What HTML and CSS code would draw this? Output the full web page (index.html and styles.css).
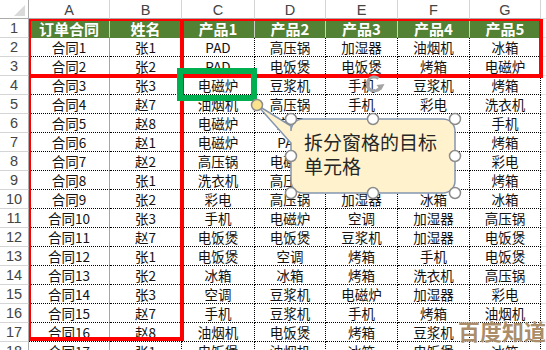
FILE: index.html
```html
<!DOCTYPE html>
<html lang="zh-CN">
<head>
    <meta charset="UTF-8">
    <title>拆分窗格</title>
    <link rel="stylesheet" href="styles.css">
</head>
<body>
<div class="page">
    <div class="sheet">
        <div class="corner"><span class="tri"></span></div>
        <div class="ch">A</div><div class="ch">B</div><div class="ch">C</div><div class="ch">D</div><div class="ch">E</div><div class="ch">F</div><div class="ch">G</div><div class="ch rest"></div>

        <div class="rh">1</div><div class="cell hdr">订单合同</div><div class="cell hdr">姓名</div><div class="cell hdr">产品1</div><div class="cell hdr">产品2</div><div class="cell hdr">产品3</div><div class="cell hdr">产品4</div><div class="cell hdr">产品5</div><div class="rest"></div>
        <div class="rh">2</div><div class="cell a">合同1</div><div class="cell">张1</div><div class="cell">PAD</div><div class="cell">高压锅</div><div class="cell">加湿器</div><div class="cell">油烟机</div><div class="cell">冰箱</div><div class="rest"></div>
        <div class="rh">3</div><div class="cell a">合同2</div><div class="cell">张2</div><div class="cell">PAD</div><div class="cell">电饭煲</div><div class="cell">电饭煲</div><div class="cell">烤箱</div><div class="cell">电磁炉</div><div class="rest"></div>
        <div class="rh">4</div><div class="cell a">合同3</div><div class="cell">张3</div><div class="cell">电磁炉</div><div class="cell">豆浆机</div><div class="cell">手机</div><div class="cell">豆浆机</div><div class="cell">烤箱</div><div class="rest"></div>
        <div class="rh">5</div><div class="cell a">合同4</div><div class="cell">赵7</div><div class="cell">油烟机</div><div class="cell">高压锅</div><div class="cell">手机</div><div class="cell">彩电</div><div class="cell">洗衣机</div><div class="rest"></div>
        <div class="rh">6</div><div class="cell a">合同5</div><div class="cell">赵8</div><div class="cell">电磁炉</div><div class="cell">空调</div><div class="cell"></div><div class="cell"></div><div class="cell">手机</div><div class="rest"></div>
        <div class="rh">7</div><div class="cell a">合同6</div><div class="cell">赵1</div><div class="cell">电磁炉</div><div class="cell">PAD</div><div class="cell"></div><div class="cell"></div><div class="cell">烤箱</div><div class="rest"></div>
        <div class="rh">8</div><div class="cell a">合同7</div><div class="cell">赵2</div><div class="cell">高压锅</div><div class="cell">电磁炉</div><div class="cell"></div><div class="cell"></div><div class="cell">彩电</div><div class="rest"></div>
        <div class="rh">9</div><div class="cell a">合同8</div><div class="cell">张1</div><div class="cell">洗衣机</div><div class="cell">高压锅</div><div class="cell"></div><div class="cell"></div><div class="cell">烤箱</div><div class="rest"></div>
        <div class="rh">10</div><div class="cell a">合同9</div><div class="cell">张2</div><div class="cell">彩电</div><div class="cell">高压锅</div><div class="cell">加湿器</div><div class="cell">冰箱</div><div class="cell">冰箱</div><div class="rest"></div>
        <div class="rh">11</div><div class="cell a">合同10</div><div class="cell">张3</div><div class="cell">手机</div><div class="cell">电磁炉</div><div class="cell">空调</div><div class="cell">加湿器</div><div class="cell">高压锅</div><div class="rest"></div>
        <div class="rh">12</div><div class="cell a">合同11</div><div class="cell">赵7</div><div class="cell">电饭煲</div><div class="cell">电饭煲</div><div class="cell">豆浆机</div><div class="cell">加湿器</div><div class="cell">电饭煲</div><div class="rest"></div>
        <div class="rh">13</div><div class="cell a">合同12</div><div class="cell">张1</div><div class="cell">电饭煲</div><div class="cell">空调</div><div class="cell">烤箱</div><div class="cell">手机</div><div class="cell">电饭煲</div><div class="rest"></div>
        <div class="rh">14</div><div class="cell a">合同13</div><div class="cell">张2</div><div class="cell">冰箱</div><div class="cell">冰箱</div><div class="cell">烤箱</div><div class="cell">洗衣机</div><div class="cell">高压锅</div><div class="rest"></div>
        <div class="rh">15</div><div class="cell a">合同14</div><div class="cell">张3</div><div class="cell">空调</div><div class="cell">豆浆机</div><div class="cell">电磁炉</div><div class="cell">加湿器</div><div class="cell">彩电</div><div class="rest"></div>
        <div class="rh">16</div><div class="cell a">合同15</div><div class="cell">赵7</div><div class="cell">手机</div><div class="cell">豆浆机</div><div class="cell">手机</div><div class="cell">烤箱</div><div class="cell">油烟机</div><div class="rest"></div>
        <div class="rh">17</div><div class="cell a">合同16</div><div class="cell">赵8</div><div class="cell">油烟机</div><div class="cell">电饭煲</div><div class="cell">烤箱</div><div class="cell">豆浆机</div><div class="cell"></div><div class="rest"></div>
        <div class="rh">18</div><div class="cell a">合同17</div><div class="cell">张1</div><div class="cell">电饭煲</div><div class="cell">油烟机</div><div class="cell">冰箱</div><div class="cell">电饭煲</div><div class="cell">冰箱</div><div class="rest"></div>
    </div>

    <!-- red outlines, green target cell -->
    <div class="mark mark-top"></div>
    <div class="mark mark-left"></div>
    <div class="mark mark-split"></div>
    <div class="target"></div>

    <!-- callout shape with selection handles -->
    <svg class="callout" width="546" height="350" viewBox="0 0 546 350">
        <path d="M303,119 H443 A12,12 0 0 1 455,131 V181 A12,12 0 0 1 443,193 H303 A12,12 0 0 1 291,181 V143 L257,105 L291,126 V131 A12,12 0 0 1 303,119 Z" fill="#fff2cc" stroke="#8497b0" stroke-width="1.5"/>
        <path d="M378.5,78.5 A7,7 0 1 0 380.5,87" fill="none" stroke="#a3a3a3" stroke-width="3"/>
        <polygon points="376.5,85 384.5,84 381,90.5" fill="#a3a3a3"/>
        <g fill="#fff" stroke="#8c8c8c" stroke-width="1.5">
            <circle cx="291" cy="119" r="5.5"/>
            <circle cx="373" cy="119" r="5.5"/>
            <circle cx="455" cy="119" r="5.5"/>
            <circle cx="291" cy="156" r="5.5"/>
            <circle cx="455" cy="156" r="5.5"/>
            <circle cx="291" cy="193" r="5.5"/>
            <circle cx="373" cy="193" r="5.5"/>
            <circle cx="455" cy="193" r="5.5"/>
        </g>
        <circle cx="257" cy="105" r="5.5" fill="#fbe38e" stroke="#8c8c8c" stroke-width="1.5"/>
    </svg>
    <div class="callout-text">拆分窗格的目标<br>单元格</div>

    <div class="watermark">百度知道</div>
</div>
</body>
</html>
```

FILE: styles.css
```css
body {
    margin: 0;
    background: #fff;
}

.page {
    position: relative;
    width: 546px;
    height: 350px;
    overflow: hidden;
}

.sheet {
    display: grid;
    grid-template-columns: 29px 81px 72px 73px 71px 72px 72px 71px 1fr;
    grid-auto-rows: 19px;
}

.sheet > div {
    box-sizing: border-box;
    white-space: nowrap;
    overflow: hidden;
}

.corner {
    position: relative;
    border-right: 1px solid #ababab;
    border-bottom: 1px solid #ababab;
}

.tri {
    position: absolute;
    right: 3px;
    bottom: 2px;
    width: 0;
    height: 0;
    border-left: 11px solid transparent;
    border-bottom: 11px solid #dadada;
}

.ch {
    border-right: 1px solid #d5d5d5;
    border-bottom: 1px solid #ababab;
    color: #444;
    font: 14.5px/19px "Liberation Sans", Arial, sans-serif;
    padding-top: 1px;
    text-align: center;
}

.ch.rest {
    border-right: none;
}

.rh {
    border-right: 1px solid #ababab;
    border-bottom: 1px solid #d5d5d5;
    color: #444;
    font: 14.5px/19px "Liberation Sans", Arial, sans-serif;
    text-align: center;
}

.cell {
    border-right: 1px dotted #000;
    border-bottom: 1px dotted #000;
    color: #111;
    font: 13.5px/19px "Noto Sans CJK SC", sans-serif;
    text-align: center;
}

.cell.a {
    border-right: 1px solid #a6a6a6;
}

.cell.hdr {
    background: #548235;
    color: #fff;
    font-weight: bold;
    font-size: 15px;
    border-right: 1px solid #c9d3c2;
    border-bottom: 1px solid #548235;
}

.rest {
    border-bottom: 1px solid #e1e1e1;
}

.mark {
    position: absolute;
    box-sizing: border-box;
    border: 4px solid #ff0000;
}

.mark-top {
    left: 29px;
    top: 19px;
    width: 514px;
    height: 59px;
    border-width: 2px 4px 4px 2px;
}

.mark-left {
    left: 29px;
    top: 74px;
    width: 155px;
    height: 267px;
    border-width: 4px 4px 4px 2px;
}

.mark-split {
    left: 180px;
    top: 19px;
    width: 4px;
    height: 58px;
    border-width: 0 0 0 4px;
}

.target {
    position: absolute;
    left: 177px;
    top: 68px;
    width: 80px;
    height: 33px;
    box-sizing: border-box;
    border: 6px solid #00b050;
}

.callout {
    position: absolute;
    left: 0;
    top: 0;
}

.callout-text {
    position: absolute;
    left: 304px;
    top: 130px;
    color: #262626;
    font: 19px/24px "Noto Sans CJK SC", sans-serif;
}

.watermark {
    position: absolute;
    left: 458px;
    top: 318px;
    color: rgba(160, 126, 84, 0.88);
    font: bold 22px/24px "Noto Sans CJK SC", sans-serif;
    text-shadow: 0 0 1px #fff;
}
```
